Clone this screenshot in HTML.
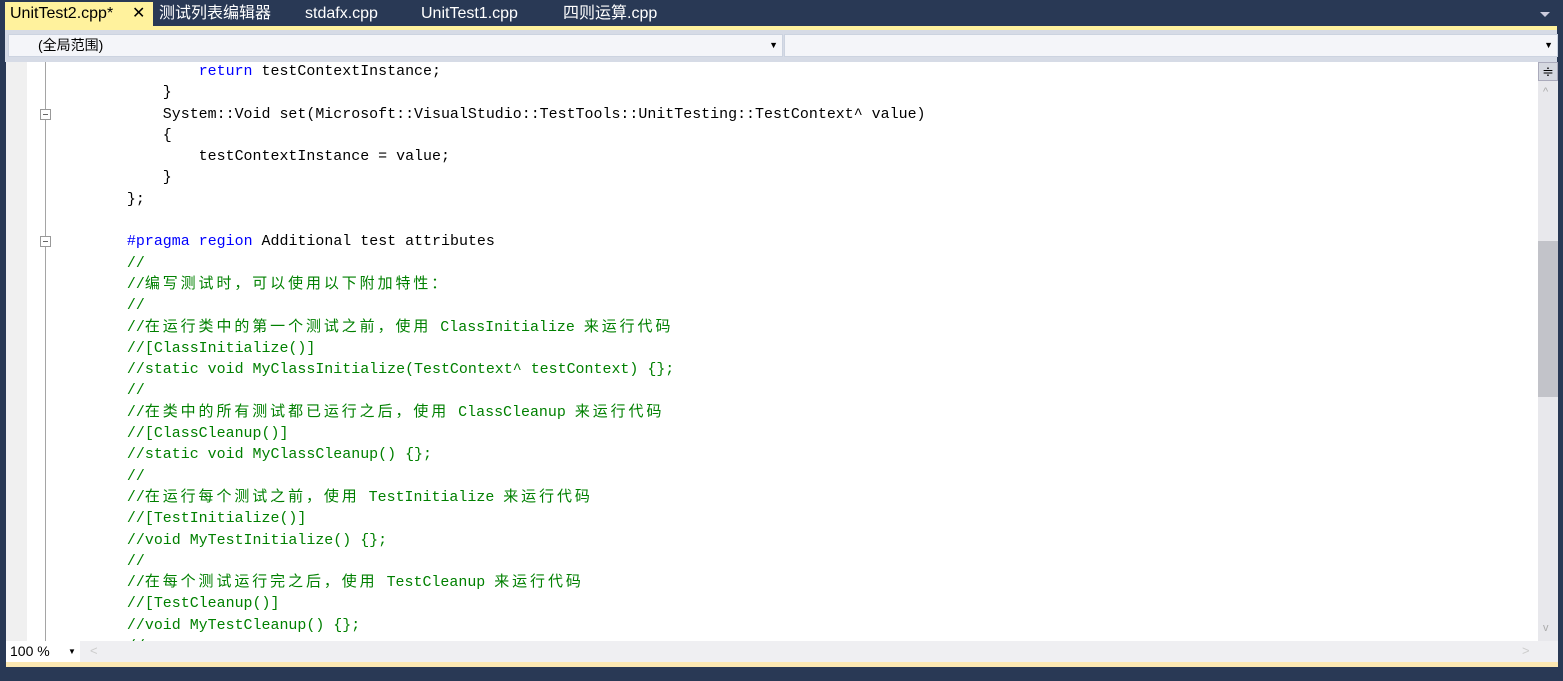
<!DOCTYPE html>
<html><head><meta charset="utf-8"><style>
*{margin:0;padding:0;box-sizing:border-box}
body{width:1563px;height:681px;background:#293955;position:relative;overflow:hidden;font-family:"Liberation Sans","Noto Sans CJK SC",sans-serif}
.tab{position:absolute;top:2px;height:24px;font-size:16px;color:#fff;line-height:24px}
#yl{position:absolute;left:5px;right:6px;top:26px;height:4px;background:#fff29d}
#tb{position:absolute;left:5px;right:6px;top:30px;height:32px;background:#d6dbe6}
.dd{position:absolute;top:4px;height:23px;border:1px solid #ccd3e0;font-size:14px;line-height:21px;background:#f4f5f9}
#ed{position:absolute;left:6px;top:62px;width:1532px;height:579px;background:#fff;overflow:hidden}
#mg{position:absolute;left:0;top:0;width:21px;height:100%;background:#f0f0f0}
#code{position:absolute;left:85px;top:0px;font-family:"Liberation Mono","Noto Sans CJK SC",monospace;font-size:14.96px;line-height:21.3px;white-space:pre;color:#000}
.g{color:#008000}.k{color:#0000ff}.c{letter-spacing:2.95px}
.fb{position:absolute;left:34px;width:11px;height:11px;border:1px solid #999;background:#fff}
.fb:after{content:"";position:absolute;left:2px;top:4px;width:5px;height:1px;background:#666}
#sb{position:absolute;left:1538px;top:62px;width:20px;height:579px;background:#e8e8ec}
#bt{position:absolute;left:6px;top:641px;width:1552px;height:21px;background:#efeff2}
#yb{position:absolute;left:6px;top:662px;width:1552px;height:5px;background:#fce8b2}
</style></head><body>
<div class="tab" style="left:5px;width:148px;background:#fff29d;color:#000;padding-left:5px">UnitTest2.cpp* <span style="position:absolute;left:127px;font-size:16px">✕</span></div>
<div class="tab" style="left:159px">测试列表编辑器</div>
<div class="tab" style="left:305px">stdafx.cpp</div>
<div class="tab" style="left:421px">UnitTest1.cpp</div>
<div class="tab" style="left:563px">四则运算.cpp</div>
<div style="position:absolute;left:1540px;top:12px;width:0;height:0;border-left:5px solid transparent;border-right:5px solid transparent;border-top:5px solid #ccd;"></div>
<div id="yl"></div>
<div id="tb">
<div class="dd" style="left:3px;width:775px;padding-left:29px">(全局范围)<span style="position:absolute;right:4px;top:0;font-size:9px">▼</span></div>
<div class="dd" style="left:779px;width:774px"><span style="position:absolute;right:4px;top:0;font-size:9px">▼</span></div>
</div>
<div id="ed">
<div id="mg"></div>
<div style="position:absolute;left:39px;top:0;width:1px;height:579px;background:#a5a5a5"></div>
<div class="fb" style="top:47px"></div>
<div class="fb" style="top:174px"></div>
<div id="code">            <span class="k">return</span> testContextInstance;
        }
        System::Void set(Microsoft::VisualStudio::TestTools::UnitTesting::TestContext^ value)
        {
            testContextInstance = value;
        }
    };

    <span class="k">#pragma</span> <span class="k">region</span> Additional test attributes
<span class="g">    //
    //<span class="c">编写测试时，可以使用以下附加特性：</span>
    //
    //<span class="c">在运行类中的第一个测试之前，使用</span> ClassInitialize <span class="c">来运行代码</span>
    //[ClassInitialize()]
    //static void MyClassInitialize(TestContext^ testContext) {};
    //
    //<span class="c">在类中的所有测试都已运行之后，使用</span> ClassCleanup <span class="c">来运行代码</span>
    //[ClassCleanup()]
    //static void MyClassCleanup() {};
    //
    //<span class="c">在运行每个测试之前，使用</span> TestInitialize <span class="c">来运行代码</span>
    //[TestInitialize()]
    //void MyTestInitialize() {};
    //
    //<span class="c">在每个测试运行完之后，使用</span> TestCleanup <span class="c">来运行代码</span>
    //[TestCleanup()]
    //void MyTestCleanup() {};
    //</span></div>
</div>
<div id="sb">
<div style="position:absolute;left:0;top:0;width:20px;height:19px;background:#d5d8e0;border:1px solid #aab;font-size:14px;text-align:center;line-height:16px">≑</div>
<div style="position:absolute;left:5px;top:24px;color:#aaa;font-size:11px">^</div>
<div style="position:absolute;left:0;top:179px;width:20px;height:156px;background:#c2c3c9"></div>
<div style="position:absolute;left:5px;top:560px;color:#aaa;font-size:11px">v</div>
</div>
<div id="bt">
<div style="position:absolute;left:0;top:0;width:74px;height:21px;background:#fff;font-size:14px;line-height:21px;padding-left:4px">100 %<span style="position:absolute;left:62px;font-size:8px">▼</span></div>
<div style="position:absolute;left:84px;top:2px;color:#ccc;font-size:13px">&lt;</div>
<div style="position:absolute;left:1516px;top:2px;color:#ccc;font-size:13px">&gt;</div>
</div>
<div id="yb"></div>
</body></html>
